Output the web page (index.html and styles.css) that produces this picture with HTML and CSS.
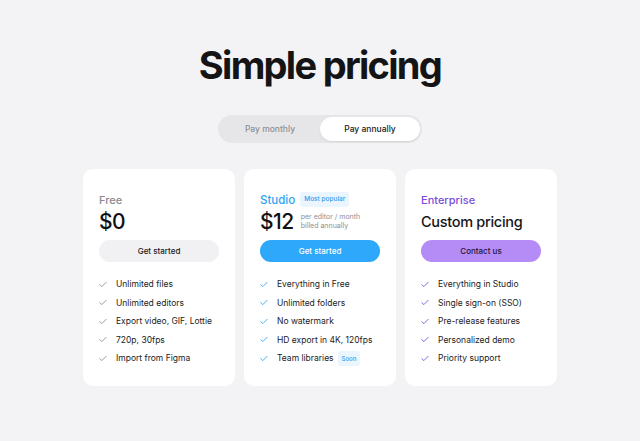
FILE: index.html
```html
<!DOCTYPE html>
<html lang="en">
<head>
    <meta charset="UTF-8">
    <meta name="viewport" content="width=device-width, initial-scale=1.0">
    <title>Simple pricing</title>
    <link rel="stylesheet" href="styles.css">
</head>
<body>
    <h1 class="title">Simple pricing</h1>

    <div class="toggle">
        <button class="toggle-option">Pay monthly</button>
        <button class="toggle-option active">Pay annually</button>
    </div>

    <div class="plans">
        <div class="plan">
            <div class="plan-name free">Free</div>
            <div class="plan-price">
                <span class="amount">$0</span>
            </div>
            <button class="plan-btn btn-free">Get started</button>
            <ul class="features check-gray">
                <li><svg viewBox="0 0 10 8"><path d="M1 4.2 3.6 6.6 9 1.2"/></svg>Unlimited files</li>
                <li><svg viewBox="0 0 10 8"><path d="M1 4.2 3.6 6.6 9 1.2"/></svg>Unlimited editors</li>
                <li><svg viewBox="0 0 10 8"><path d="M1 4.2 3.6 6.6 9 1.2"/></svg>Export video, GIF, Lottie</li>
                <li><svg viewBox="0 0 10 8"><path d="M1 4.2 3.6 6.6 9 1.2"/></svg>720p, 30fps</li>
                <li><svg viewBox="0 0 10 8"><path d="M1 4.2 3.6 6.6 9 1.2"/></svg>Import from Figma</li>
            </ul>
        </div>

        <div class="plan">
            <div class="plan-name studio">Studio <span class="tag">Most popular</span></div>
            <div class="plan-price">
                <span class="amount">$12</span>
                <span class="per">per editor / month<br>billed annually</span>
            </div>
            <button class="plan-btn btn-studio">Get started</button>
            <ul class="features check-blue">
                <li><svg viewBox="0 0 10 8"><path d="M1 4.2 3.6 6.6 9 1.2"/></svg>Everything in Free</li>
                <li><svg viewBox="0 0 10 8"><path d="M1 4.2 3.6 6.6 9 1.2"/></svg>Unlimited folders</li>
                <li><svg viewBox="0 0 10 8"><path d="M1 4.2 3.6 6.6 9 1.2"/></svg>No watermark</li>
                <li><svg viewBox="0 0 10 8"><path d="M1 4.2 3.6 6.6 9 1.2"/></svg>HD export in 4K, 120fps</li>
                <li><svg viewBox="0 0 10 8"><path d="M1 4.2 3.6 6.6 9 1.2"/></svg>Team libraries <span class="tag small">Soon</span></li>
            </ul>
        </div>

        <div class="plan">
            <div class="plan-name enterprise">Enterprise</div>
            <div class="plan-price">
                <span class="custom">Custom pricing</span>
            </div>
            <button class="plan-btn btn-enterprise">Contact us</button>
            <ul class="features check-purple">
                <li><svg viewBox="0 0 10 8"><path d="M1 4.2 3.6 6.6 9 1.2"/></svg>Everything in Studio</li>
                <li><svg viewBox="0 0 10 8"><path d="M1 4.2 3.6 6.6 9 1.2"/></svg>Single sign-on (SSO)</li>
                <li><svg viewBox="0 0 10 8"><path d="M1 4.2 3.6 6.6 9 1.2"/></svg>Pre-release features</li>
                <li><svg viewBox="0 0 10 8"><path d="M1 4.2 3.6 6.6 9 1.2"/></svg>Personalized demo</li>
                <li><svg viewBox="0 0 10 8"><path d="M1 4.2 3.6 6.6 9 1.2"/></svg>Priority support</li>
            </ul>
        </div>
    </div>
</body>
</html>
```

FILE: styles.css
```css
body {
    font-family: Inter, "Liberation Sans", sans-serif;
    background-color: #f3f3f5;
    color: #1a1a1c;
    margin: 0;
    padding: 42px 0 0;
}
.title {
    font-size: 38px;
    line-height: 47px;
    font-weight: 700;
    letter-spacing: -1.7px;
    text-align: center;
    margin: 0 0 26px;
    color: #141416;
}
.toggle {
    display: flex;
    width: 204px;
    height: 28px;
    box-sizing: border-box;
    margin: 0 auto 26px;
    padding: 2px;
    background: #e6e6e9;
    border-radius: 14px;
}
.toggle-option {
    flex: 1;
    border: none;
    background: transparent;
    border-radius: 12px;
    font-family: inherit;
    font-size: 8.5px;
    font-weight: 500;
    color: #8e8e93;
    cursor: pointer;
}
.toggle-option.active {
    background: #ffffff;
    color: #1a1a1c;
    box-shadow: 0 1px 2px rgba(0, 0, 0, 0.08);
}
.plans {
    display: grid;
    grid-template-columns: repeat(3, 152px);
    gap: 9px;
    justify-content: center;
}
.plan {
    background: #ffffff;
    border-radius: 10px;
    padding: 23px 16px 18px;
    display: flex;
    flex-direction: column;
}
.plan-name {
    height: 15px;
    display: flex;
    align-items: center;
    gap: 5px;
    font-size: 11px;
    font-weight: 500;
}
.plan-name.free {
    color: #8a8a8f;
}
.plan-name.studio {
    color: #2da5f5;
    font-size: 11.5px;
}
.plan-name.enterprise {
    color: #7a4ddb;
}
.tag {
    display: inline-block;
    background: #eaf5fe;
    color: #2c9def;
    font-size: 6.5px;
    font-weight: 500;
    padding: 4px 4px;
    border-radius: 3px;
    line-height: 7px;
}
.tag.small {
    font-size: 6px;
    margin-left: 4px;
}
.plan-price {
    height: 20px;
    margin-top: 4px;
    display: flex;
    align-items: center;
    gap: 7px;
}
.amount {
    font-size: 21px;
    font-weight: 500;
    letter-spacing: -0.5px;
    color: #111113;
}
.per {
    font-size: 7px;
    line-height: 9px;
    color: #8e8e93;
}
.custom {
    font-size: 14.5px;
    font-weight: 500;
    letter-spacing: -0.3px;
    color: #151517;
}
.plan-btn {
    margin-top: 9px;
    height: 22px;
    border: none;
    border-radius: 11px;
    font-family: inherit;
    font-size: 8px;
    font-weight: 500;
    cursor: pointer;
}
.btn-free {
    background: #f1f1f3;
    color: #1a1a1c;
}
.btn-studio {
    background: #2ea8fb;
    color: #ffffff;
}
.btn-enterprise {
    background: #b58cf6;
    color: #1f1536;
}
.features {
    list-style: none;
    margin: 13px 0 0;
    padding: 0;
}
.features li {
    display: flex;
    align-items: center;
    height: 18.5px;
    font-size: 8.5px;
    color: #222224;
}
.features svg {
    width: 8px;
    height: 7px;
    margin-right: 9px;
    fill: none;
    stroke-width: 1.1;
    stroke-linecap: round;
    stroke-linejoin: round;
}
.check-gray svg {
    stroke: #8e8e93;
}
.check-blue svg {
    stroke: #2da5f5;
}
.check-purple svg {
    stroke: #7a4ddb;
}
```
